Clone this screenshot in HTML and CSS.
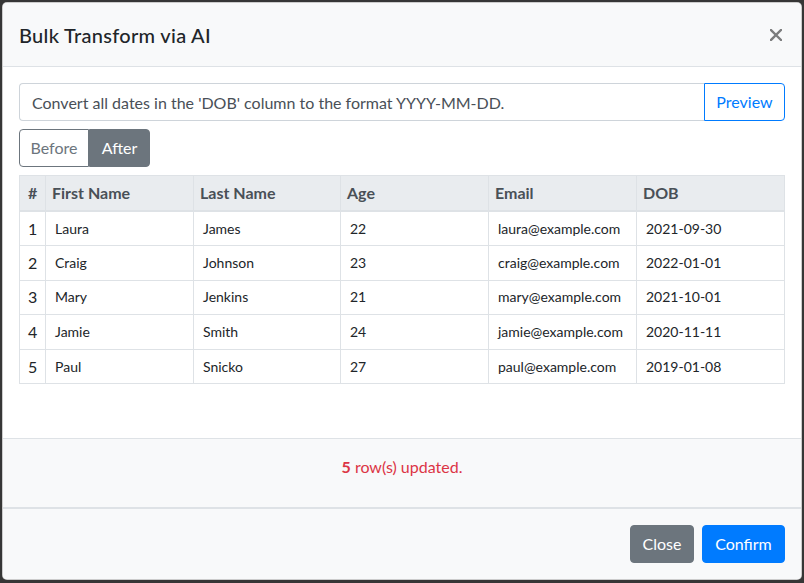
FILE: index.html
```html
<!DOCTYPE html>
<html>
<head>
<meta charset="utf-8">
<link rel="stylesheet" href="styles.css">
</head>
<body>
<div class="modal">
  <div class="modal-header">
    <h5 class="modal-title">Bulk Transform via AI</h5>
    <button class="close" aria-label="Close">
      <svg width="12" height="12" viewBox="0 0 12 12"><path d="M1 1L11 11M11 1L1 11" stroke="currentColor" stroke-width="2.4" stroke-linecap="square"/></svg>
    </button>
  </div>
  <div class="modal-body">
    <div class="input-group">
      <input class="form-control" type="text" value="Convert all dates in the 'DOB' column to the format YYYY-MM-DD.">
      <button class="btn btn-outline-primary btn-preview">Preview</button>
    </div>
    <div class="btn-group">
      <button class="btn btn-outline-secondary btn-before">Before</button>
      <button class="btn btn-secondary btn-after">After</button>
    </div>
    <table class="data-table">
      <colgroup>
        <col class="c-num"><col class="c-w"><col class="c-w2"><col class="c-w"><col class="c-w"><col class="c-w">
      </colgroup>
      <thead>
        <tr><th class="num">#</th><th>First Name</th><th>Last Name</th><th>Age</th><th>Email</th><th>DOB</th></tr>
      </thead>
      <tbody>
        <tr><td class="num">1</td><td>Laura</td><td>James</td><td>22</td><td>laura@example.com</td><td>2021-09-30</td></tr>
        <tr><td class="num">2</td><td>Craig</td><td>Johnson</td><td>23</td><td>craig@example.com</td><td>2022-01-01</td></tr>
        <tr><td class="num">3</td><td>Mary</td><td>Jenkins</td><td>21</td><td>mary@example.com</td><td>2021-10-01</td></tr>
        <tr><td class="num">4</td><td>Jamie</td><td>Smith</td><td>24</td><td>jamie@example.com</td><td>2020-11-11</td></tr>
        <tr><td class="num">5</td><td>Paul</td><td>Snicko</td><td>27</td><td>paul@example.com</td><td>2019-01-08</td></tr>
      </tbody>
    </table>
  </div>
  <div class="status"><strong>5</strong> row(s) updated.</div>
  <div class="modal-footer">
    <button class="btn btn-secondary btn-close">Close</button>
    <button class="btn btn-primary btn-confirm">Confirm</button>
  </div>
</div>
</body>
</html>
```
FILE: styles.css
```css
* { box-sizing: border-box; }
html, body { margin: 0; }
body {
  background: #363636;
  padding: 2px;
  font-family: "Lato", "Noto Sans", sans-serif;
  font-size: 16px;
  line-height: 24px;
  color: #212529;
}
.modal {
  width: 800px;
  background: #fff;
  border: 1px solid rgba(0,0,0,.2);
  border-radius: 5px;
  overflow: hidden;
}
.modal-header {
  display: flex;
  align-items: center;
  justify-content: space-between;
  height: 64px;
  padding: 0 16px;
  background: #f8f9fa;
  border-bottom: 1px solid #dee2e6;
}
.modal-title {
  margin: 0;
  font-size: 20px;
  font-weight: 500;
  line-height: 30px;
  letter-spacing: 0.3px;
  color: #212529;
}
.close {
  border: 0;
  background: transparent;
  padding: 0;
  margin-right: 3px;
  margin-top: 0;
  color: #7b7c7d;
  display: flex;
}
.modal-body {
  display: flex;
  flex-direction: column;
  align-items: flex-start;
  gap: 8px;
  padding: 16px 16px 54px;
}
.input-group {
  display: flex;
  width: 100%;
  height: 38px;
}
.form-control {
  flex: 1;
  min-width: 0;
  height: 38px;
  padding: 6px 12px;
  font: inherit;
  color: #495057;
  border: 1px solid #ced4da;
  border-right: 0;
  border-radius: 4px 0 0 4px;
  background: #fff;
}
.btn {
  height: 38px;
  padding: 6px 0;
  font: inherit;
  font-size: 16px;
  line-height: 24px;
  text-align: center;
  border: 1px solid transparent;
  border-radius: 4px;
  background: transparent;
}
.btn-outline-primary { color: #007bff; border-color: #007bff; }
.btn-preview { width: 81px; border-radius: 0 4px 4px 0; }
.btn-group { display: flex; }
.btn-outline-secondary { color: #6c757d; border-color: #6c757d; background: #fff; }
.btn-secondary { color: #fff; background: #6c757d; border-color: #6c757d; }
.btn-primary { color: #fff; background: #007bff; border-color: #007bff; }
.btn-before { width: 70px; border-radius: 4px 0 0 4px; }
.btn-after { width: 61px; border-radius: 0 4px 4px 0; }
.data-table {
  width: 765px;
  table-layout: fixed;
  border-collapse: collapse;
  border: 1px solid #dee2e6;
}
.c-num { width: 26px; }
.c-w { width: 148px; }
.c-w2 { width: 147px; }
.data-table th {
  background: #e9ecef;
  color: #495057;
  font-weight: 700;
  text-align: left;
  padding: 5px 6px;
  border: 1px solid #dee2e6;
  border-bottom: 2px solid #dee2e6;
  line-height: 24px;
  white-space: nowrap;
}
.data-table td {
  font-size: 14px;
  height: 34.6px;
  padding: 0 9px;
  border: 1px solid #dee2e6;
  white-space: nowrap;
}
.data-table .num { padding: 0 8px; font-size: 16px; }
.data-table th.num { padding: 5px 8px; }
.status {
  text-align: center;
  color: #dc3545;
  background: #f8f9fa;
  border-top: 1px solid #dee2e6;
  border-bottom: 2px solid #dee2e6;
  padding: 16px 16px 28px;
}
.modal-footer {
  display: flex;
  justify-content: flex-end;
  gap: 8px;
  padding: 16px;
  background: #f8f9fa;
}
.btn-close { width: 64px; }
.btn-confirm { width: 83px; }
```
